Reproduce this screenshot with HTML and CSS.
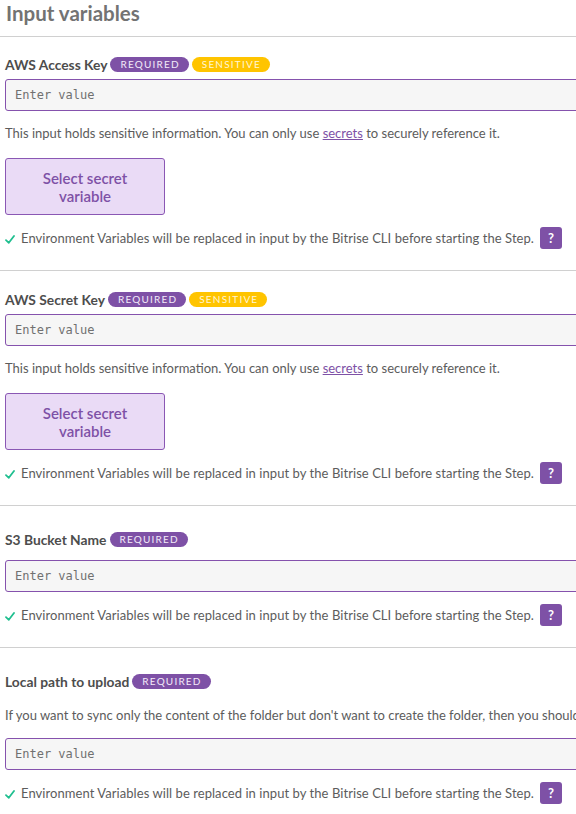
FILE: index.html
```html
<!DOCTYPE html>
<html>
<head>
<meta charset="utf-8">
<link rel="stylesheet" href="styles.css">
</head>
<body>
<div class="page">
  <h1 class="title">Input variables</h1>

  <section class="field">
    <div class="label-row"><span class="label">AWS Access Key</span><span class="badge req">REQUIRED</span><span class="badge sens">SENSITIVE</span></div>
    <div class="input">Enter value</div>
    <p class="help">This input holds sensitive information. You can only use <a class="link">secrets</a> to securely reference it.</p>
    <button class="secret-btn">Select secret<br>variable</button>
    <div class="env"><svg class="check" width="10" height="9" viewBox="0 0 10 9"><path d="M1 5.2 L3.8 7.8 L9 1" fill="none" stroke="#1fbf8f" stroke-width="1.8" stroke-linecap="round" stroke-linejoin="round"/></svg><span class="env-text">Environment Variables will be replaced in input by the Bitrise CLI before starting the Step.</span><span class="q">?</span></div>
  </section>

  <section class="field second">
    <div class="label-row"><span class="label">AWS Secret Key</span><span class="badge req">REQUIRED</span><span class="badge sens">SENSITIVE</span></div>
    <div class="input">Enter value</div>
    <p class="help">This input holds sensitive information. You can only use <a class="link">secrets</a> to securely reference it.</p>
    <button class="secret-btn">Select secret<br>variable</button>
    <div class="env"><svg class="check" width="10" height="9" viewBox="0 0 10 9"><path d="M1 5.2 L3.8 7.8 L9 1" fill="none" stroke="#1fbf8f" stroke-width="1.8" stroke-linecap="round" stroke-linejoin="round"/></svg><span class="env-text">Environment Variables will be replaced in input by the Bitrise CLI before starting the Step.</span><span class="q">?</span></div>
  </section>

  <section class="field plain">
    <div class="label-row"><span class="label">S3 Bucket Name</span><span class="badge req">REQUIRED</span></div>
    <div class="input">Enter value</div>
    <div class="env"><svg class="check" width="10" height="9" viewBox="0 0 10 9"><path d="M1 5.2 L3.8 7.8 L9 1" fill="none" stroke="#1fbf8f" stroke-width="1.8" stroke-linecap="round" stroke-linejoin="round"/></svg><span class="env-text">Environment Variables will be replaced in input by the Bitrise CLI before starting the Step.</span><span class="q">?</span></div>
  </section>

  <section class="field plain">
    <div class="label-row"><span class="label">Local path to upload</span><span class="badge req">REQUIRED</span></div>
    <p class="help desc">If you want to sync only the content of the folder but don't want to create the folder, then you should append a slash at the end of the path.</p>
    <div class="input">Enter value</div>
    <div class="env"><svg class="check" width="10" height="9" viewBox="0 0 10 9"><path d="M1 5.2 L3.8 7.8 L9 1" fill="none" stroke="#1fbf8f" stroke-width="1.8" stroke-linecap="round" stroke-linejoin="round"/></svg><span class="env-text">Environment Variables will be replaced in input by the Bitrise CLI before starting the Step.</span><span class="q">?</span></div>
  </section>
</div>
</body>
</html>
```

FILE: styles.css
```css
html, body {
  margin: 0;
  padding: 0;
  background: #fff;
  overflow: hidden;
}
body {
  font-family: "Lato", "Noto Sans", sans-serif;
  color: #555;
}
.page {
  width: 576px;
  overflow: hidden;
}
.title {
  margin: 0;
  padding: 2px 6px 0;
  height: 34px;
  font-size: 20.5px;
  font-weight: 700;
  color: #737373;
  line-height: 22px;
  border-bottom: 1px solid #d0d0d0;
}
.field {
  padding: 19px 0 21px 5px;
  border-bottom: 1px solid #d0d0d0;
  display: flex;
  flex-direction: column;
  align-items: flex-start;
}
.field.second {
  padding-top: 20px;
}
.field.plain {
  padding-top: 25px;
}
.label-row {
  display: flex;
  align-items: center;
  height: 16px;
  gap: 3px;
}
.label {
  font-weight: 700;
  font-size: 13.8px;
  color: #4d4d4d;
}
.badge {
  display: inline-flex;
  align-items: center;
  height: 15px;
  padding: 0 9px 0 10px;
  border-radius: 8px;
  font-size: 10px;
  letter-spacing: 1.2px;
  color: #fff;
}
.badge.req {
  background: #7e51a6;
  color: #f3ebf9;
}
.badge.sens {
  background: #ffc400;
  color: #fff6d5;
}
.input {
  box-sizing: border-box;
  margin-top: 7px;
  width: 640px;
  height: 32px;
  border: 1px solid #8552ad;
  border-radius: 3px;
  background: #f6f6f6;
  font-family: "DejaVu Sans Mono", "Liberation Mono", monospace;
  font-size: 12px;
  color: #707070;
  padding: 0 9px;
  display: flex;
  align-items: center;
  flex-shrink: 0;
}
.field.plain .label-row + .input {
  margin-top: 13px;
}
.help {
  margin: 14px 0 0;
  font-size: 13px;
  line-height: 16px;
  color: #5c5c5c;
  white-space: nowrap;
}
.help.desc {
  margin: 18px 0 0;
}
.help.desc + .input {
  margin-top: 15px;
}
.link {
  color: #7e51a6;
  text-decoration: underline;
}
.secret-btn {
  margin-top: 17px;
  box-sizing: border-box;
  width: 160px;
  height: 57px;
  background: #eadbf6;
  border: 1px solid #8a57b4;
  border-radius: 3px;
  color: #7e51a6;
  font-family: "Lato", "Noto Sans", sans-serif;
  font-size: 15px;
  font-weight: 600;
  line-height: 18px;
  padding: 0;
}
.env {
  margin-top: 12px;
  display: flex;
  align-items: center;
  height: 22px;
}
.check {
  margin-right: 6px;
  margin-top: 2px;
}
.env-text {
  font-size: 13px;
  letter-spacing: 0.06px;
  color: #5c5c5c;
}
.q {
  margin-left: 6px;
  width: 22px;
  height: 22px;
  border-radius: 3px;
  background: #7e51a6;
  color: #fff;
  font-size: 13px;
  font-weight: 700;
  display: flex;
  align-items: center;
  justify-content: center;
}
```
